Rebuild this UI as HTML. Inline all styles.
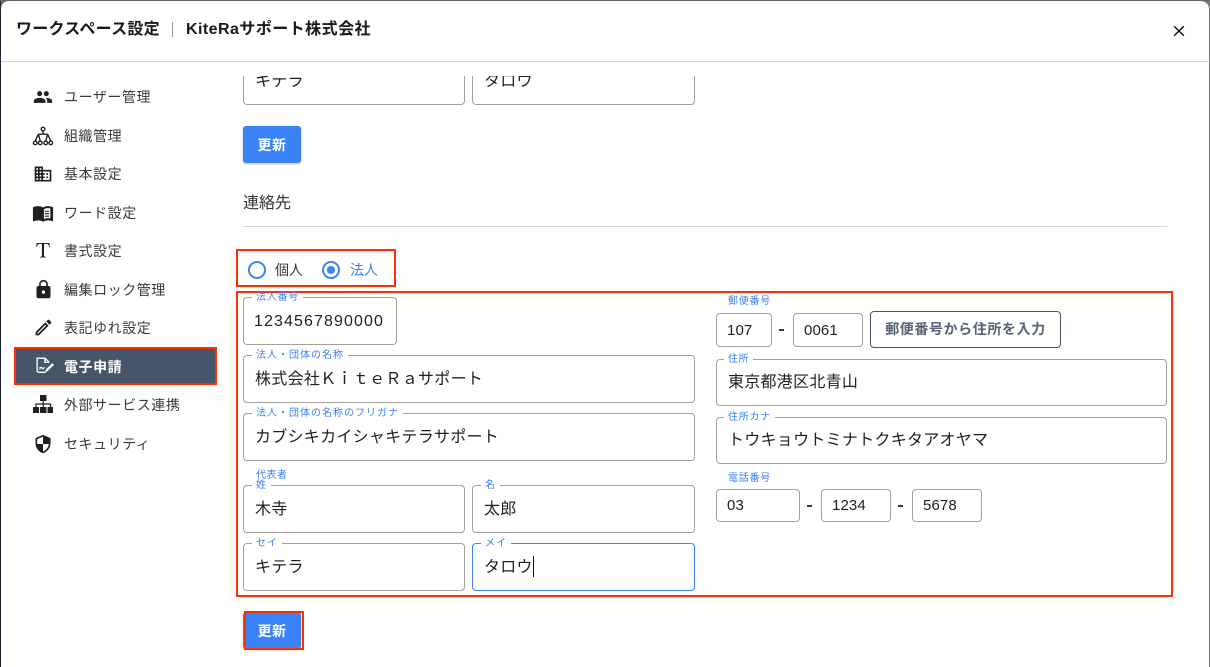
<!DOCTYPE html>
<html lang="ja"><head><meta charset="utf-8"><title>ワークスペース設定</title>
<style>
*{box-sizing:border-box;margin:0;padding:0}
html,body{width:1210px;height:667px;overflow:hidden;background:#777;font-family:"Liberation Sans","Noto Sans CJK JP",sans-serif;color:#1f1f1f}
.abs,.i,.l,.s,.ic,.r,.t{position:absolute}
#bgl{left:0;top:0;width:1px;height:667px;background:#1c2733}
#bgt{left:0;top:0;width:1210px;height:1px;background:#666}
#modal{position:absolute;left:1px;top:1px;width:1208px;height:666px;background:#fff;border-radius:8px 8px 0 0;overflow:hidden}
#page{position:absolute;left:-1px;top:-1px;width:1210px;height:667px}
.t{font-weight:700;font-size:16px;line-height:24px;top:18px;color:#1a1a1a;white-space:nowrap}
.s{left:64px;font-size:14px;letter-spacing:.55px;line-height:20px;color:#3a3a3a;white-space:nowrap}
.ic{fill:#1f1f1f}
.i{border:1px solid #a3a09b;border-radius:4px;background:#fff;font-size:16px;letter-spacing:.27px;padding-left:11px;color:#1f1f1f;white-space:nowrap}
.n{letter-spacing:1.1px;padding-left:10px}
.d{font-size:15px;letter-spacing:.1px;padding-left:10px}
.l{font-size:10px;letter-spacing:1px;line-height:12px;color:#3b82f6;background:#fff;padding:0 4px;white-space:nowrap}
.h{font-size:16px;line-height:20px;color:#333}
.r{border:2px solid #ff2d00;z-index:5}
.m{position:absolute;width:5px;height:2px;background:#3a3a3a}
.btn{position:absolute;background:#3b82f6;color:#fff;font-weight:700;font-size:14px;letter-spacing:.5px;text-align:center;border-radius:3px;box-shadow:0 1px 2px rgba(0,0,0,.25)}
</style></head><body>
<div class="abs" id="bgl"></div><div class="abs" id="bgt"></div>
<div id="modal"><div id="page">

<div class="t" style="left:16px;letter-spacing:.25px">ワークスペース設定</div>
<div class="abs" style="left:172px;top:22px;width:1px;height:15px;background:#999"></div>
<div class="t" style="left:186px;letter-spacing:.45px">KiteRaサポート株式会社</div>
<svg class="abs" style="left:1171px;top:23px" width="16" height="16" viewBox="0 0 16 16"><path d="M3.200 3.200 12.800 12.800M12.800 3.200 3.200 12.800" stroke="#111" stroke-width="1.400" fill="none"/></svg>
<div class="abs" style="left:0;top:61px;width:1210px;height:1px;background:#d6d6d6"></div>

<!-- sidebar -->
<svg class="abs ic" style="left:33px;top:87px" width="20" height="20" viewBox="0 0 24 24"><path d="M16 11c1.660 0 2.990-1.340 2.990-3S17.660 5 16 5c-1.660 0-3 1.340-3 3s1.340 3 3 3zm-8 0c1.660 0 2.990-1.340 2.990-3S9.660 5 8 5C6.340 5 5 6.340 5 8s1.340 3 3 3zm0 2c-2.330 0-7 1.170-7 3.500V19h14v-2.500c0-2.330-4.670-3.500-7-3.500zm8 0c-.29 0-.62.02-.97.05 1.160.84 1.970 1.970 1.970 3.450V19h6v-2.500c0-2.330-4.670-3.500-7-3.500z"/></svg>
<div class="s" style="top:87px">ユーザー管理</div>
<svg class="abs ic" style="left:32px;top:125px" width="22" height="22" viewBox="0 0 24 24"><g fill="none" stroke="#1f1f1f" stroke-width="1.500"><circle cx="12" cy="4.500" r="2"/><circle cx="3.500" cy="19.500" r="2"/><circle cx="9" cy="19.500" r="2"/><circle cx="15" cy="19.500" r="2"/><circle cx="20.500" cy="19.500" r="2"/><path d="M12 6.500V10M7 10h10M7 10l-3.500 7.500M7 10l2 7.500M17 10l-2 7.500M17 10l3.500 7.500"/></g></svg>
<div class="s" style="top:126px">組織管理</div>
<svg class="abs ic" style="left:33px;top:164px" width="20" height="20" viewBox="0 0 24 24"><path d="M12 7V3H2v18h20V7H12zM6 19H4v-2h2v2zm0-4H4v-2h2v2zm0-4H4V9h2v2zm0-4H4V5h2v2zm4 12H8v-2h2v2zm0-4H8v-2h2v2zm0-4H8V9h2v2zm0-4H8V5h2v2zm10 12h-8v-2h2v-2h-2v-2h2v-2h-2V9h8v10zm-2-8h-2v2h2v-2zm0 4h-2v2h2v-2z"/></svg>
<div class="s" style="top:164px">基本設定</div>
<svg class="abs ic" style="left:32px;top:202px" width="22" height="22" viewBox="0 0 24 24"><path d="M21 5c-1.110-.35-2.330-.5-3.500-.5-1.950 0-4.050.4-5.500 1.500-1.450-1.100-3.550-1.500-5.500-1.500S2.450 4.900 1 6v14.650c0 .25.25.5.5.5.1 0 .15-.05.25-.05C3.100 20.450 5.050 20 6.500 20c1.950 0 4.050.4 5.500 1.500 1.350-.85 3.800-1.500 5.500-1.500 1.650 0 3.350.3 4.750 1.050.1.05.15.05.25.05.25 0 .5-.25.5-.5V6c-.6-.45-1.250-.75-2-1zm-1 13c-.9-.25-1.750-.4-2.500-.4-1.700 0-3.900.5-4.500 1.100V7.900c1.350-.7 3-1.200 4.500-1.200.9 0 1.750.1 2.500.3V18z"/><path d="M14 9.500h4.500v1.200H14zM14 12.200h4.500v1.200H14zM14 14.900h4.500v1.200H14z"/></svg>
<div class="s" style="top:203px">ワード設定</div>
<svg class="abs ic" style="left:31px;top:238px" width="24" height="24" viewBox="0 0 24 24"><path d="M5.500 5h13l.3 4h-.6c-.3-2-1-3.100-2.800-3.100h-2.400V17.500c0 1 .4 1.300 1.900 1.400v.6H9v-.6c1.500-.1 1.900-.4 1.900-1.400V5.900H8.800C7 5.900 6.300 7 6 9h-.6z"/></svg>
<div class="s" style="top:241px">書式設定</div>
<svg class="abs ic" style="left:33px;top:279px" width="21" height="21" viewBox="0 0 24 24"><path d="M18 8h-1V6c0-2.760-2.240-5-5-5S7 3.240 7 6v2H6c-1.100 0-2 .9-2 2v10c0 1.100.9 2 2 2h12c1.100 0 2-.9 2-2V10c0-1.100-.9-2-2-2zm-6 9c-1.100 0-2-.9-2-2s.9-2 2-2 2 .9 2 2-.9 2-2 2zm3.100-9H8.900V6c0-1.710 1.390-3.100 3.100-3.100 1.710 0 3.100 1.390 3.100 3.100v2z"/></svg>
<div class="s" style="top:280px">編集ロック管理</div>
<svg class="abs ic" style="left:33px;top:317px" width="21" height="21" viewBox="0 0 24 24"><path d="M3 17.250V21h3.750L17.810 9.940l-3.750-3.750L3 17.250zM5.920 19H5v-.92l9.060-9.060.92.92L5.920 19zM20.710 5.630l-2.340-2.340a1 1 0 0 0-1.410 0l-1.830 1.830 3.750 3.750 1.830-1.830a1 1 0 0 0 0-1.410z"/></svg>
<div class="s" style="top:318px">表記ゆれ設定</div>

<div class="abs" style="left:14px;top:347px;width:203px;height:38px;background:#475569"></div>
<div class="r" style="left:14px;top:347px;width:203px;height:38px"></div>
<svg class="abs" style="left:33px;top:354px" width="22" height="22" viewBox="0 0 24 24"><g stroke="#fff" stroke-width="1.500" fill="none"><path d="M14 20H6.500a2 2 0 0 1-2-2V4.500H13l4.500 4.500"/><path d="M13 4.500V9h4.500"/><path d="M7.500 17v-3M7.500 16c1-2 2-2 2.500-.5s1.500 1 2.500-1.500" stroke-width="1.200"/></g><path d="M14 17l7-7 1.800 1.800-7 7-2.500.7z" fill="#fff"/></svg>
<div class="s" style="top:357px;color:#fff;font-weight:700">電子申請</div>

<svg class="abs" style="left:33px;top:395px" width="20" height="18" viewBox="0 0 20 18"><path d="M7 0h6.500v6H7zM0 12h6v6H0zM7 12h6.500v6H7zM14.500 12H20.500v6h-6z" fill="#1f1f1f"/><path d="M10.200 6v6M3 12V9h14.500v3" stroke="#1f1f1f" stroke-width="1.200" fill="none"/></svg>
<div class="s" style="top:395px">外部サービス連携</div>
<svg class="abs ic" style="left:33px;top:434px" width="20" height="20" viewBox="0 0 24 24"><path d="M12 1L3 5v6c0 5.550 3.840 10.740 9 12 5.160-1.260 9-6.450 9-12V5l-9-4zm0 10.990h7c-.53 4.120-3.280 7.790-7 8.940V12H5V6.300l7-3.110v8.800z"/></svg>
<div class="s" style="top:434px">セキュリティ</div>

<!-- clipped top fields -->
<div class="abs" style="left:230px;top:76px;width:500px;height:40px;overflow:hidden">
  <div class="i" style="left:13px;top:-19px;width:222px;height:48px;line-height:48px">キテラ</div>
  <div class="i" style="left:242px;top:-19px;width:223px;height:48px;line-height:48px">タロウ</div>
</div>

<div class="btn" style="left:243px;top:126px;width:58px;height:37px;line-height:38px">更新</div>
<div class="abs h" style="left:243px;top:194px">連絡先</div>
<div class="abs" style="left:243px;top:226px;width:924px;height:1px;background:#d8d8d8"></div>

<!-- radio -->
<div class="r" style="left:236px;top:249px;width:160px;height:38px"></div>
<div class="abs" style="left:248px;top:261px;width:18px;height:18px;border:2px solid #3b82f6;border-radius:50%"></div>
<div class="abs" style="left:275px;top:260px;font-size:14px;line-height:20px;letter-spacing:-.1px;color:#333">個人</div>
<div class="abs" style="left:322px;top:261px;width:18px;height:18px;border:2px solid #3b82f6;border-radius:50%"><div class="abs" style="left:3px;top:3px;width:8px;height:8px;border-radius:50%;background:#3b82f6"></div></div>
<div class="abs" style="left:350px;top:260px;font-size:14px;line-height:20px;letter-spacing:-.1px;color:#3b82f6">法人</div>

<div class="r" style="left:236px;top:291px;width:937px;height:306px"></div>

<!-- left form -->
<div class="i n" style="left:243px;top:297px;width:154px;height:48px;line-height:47px">1234567890000</div>
<div class="l" style="left:252px;top:293px;letter-spacing:.75px;line-height:9px;z-index:6">法人番号</div>
<div class="i" style="left:243px;top:355px;width:452px;height:48px;line-height:47px;letter-spacing:.3px">株式会社ＫｉｔｅＲａサポート</div>
<div class="l" style="left:252px;top:350px">法人・団体の名称</div>
<div class="i" style="left:243px;top:413px;width:452px;height:48px;line-height:47px">カブシキカイシャキテラサポート</div>
<div class="l" style="left:252px;top:408px">法人・団体の名称のフリガナ</div>

<div class="abs" style="left:256px;top:470px;font-size:10px;line-height:12px;letter-spacing:.5px;color:#3b82f6">代表者</div>
<div class="i" style="left:243px;top:485px;width:222px;height:48px;line-height:47px">木寺</div>
<div class="l" style="left:252px;top:480px;line-height:11px">姓</div>
<div class="i" style="left:472px;top:485px;width:223px;height:48px;line-height:47px">太郎</div>
<div class="l" style="left:481px;top:480px;line-height:11px">名</div>
<div class="i" style="left:243px;top:543px;width:222px;height:48px;line-height:47px">キテラ</div>
<div class="l" style="left:252px;top:538px">セイ</div>
<div class="i" style="left:472px;top:543px;width:223px;height:48px;line-height:47px;border-color:#3b82f6">タロウ</div>
<div class="l" style="left:481px;top:538px">メイ</div>
<div class="abs" style="left:533px;top:556px;width:1px;height:21px;background:#111"></div>

<div class="btn" style="left:243px;top:612px;width:58px;height:37px;line-height:38px">更新</div>
<div class="r" style="left:244px;top:611px;width:60px;height:39px"></div>

<!-- right form -->
<div class="abs" style="left:728px;top:296px;font-size:10px;line-height:12px;letter-spacing:.75px;color:#3b82f6;z-index:6">郵便番号</div>
<div class="i d" style="left:716px;top:313px;width:56px;height:34px;line-height:33px">107</div>
<div class="m" style="left:779px;top:329px"></div>
<div class="i d" style="left:793px;top:313px;width:70px;height:34px;line-height:33px">0061</div>
<div class="abs" style="left:870px;top:311px;width:191px;height:37px;border:1px solid #475569;border-radius:4px;color:#566377;font-weight:700;font-size:14px;letter-spacing:.6px;line-height:35px;text-align:center;white-space:nowrap">郵便番号から住所を入力</div>

<div class="i" style="left:716px;top:359px;width:451px;height:47px;line-height:45px">東京都港区北青山</div>
<div class="l" style="left:724px;top:354px;letter-spacing:.5px">住所</div>
<div class="i" style="left:716px;top:417px;width:451px;height:47px;line-height:45px">トウキョウトミナトクキタアオヤマ</div>
<div class="l" style="left:724px;top:412px;letter-spacing:.75px">住所カナ</div>

<div class="abs" style="left:728px;top:473px;font-size:10px;line-height:12px;letter-spacing:.75px;color:#3b82f6">電話番号</div>
<div class="i d" style="left:716px;top:489px;width:84px;height:33px;line-height:32px">03</div>
<div class="m" style="left:807px;top:505px"></div>
<div class="i d" style="left:821px;top:489px;width:70px;height:33px;line-height:32px">1234</div>
<div class="m" style="left:898px;top:505px"></div>
<div class="i d" style="left:912px;top:489px;width:70px;height:33px;line-height:32px">5678</div>

</div></div>
</body></html>
